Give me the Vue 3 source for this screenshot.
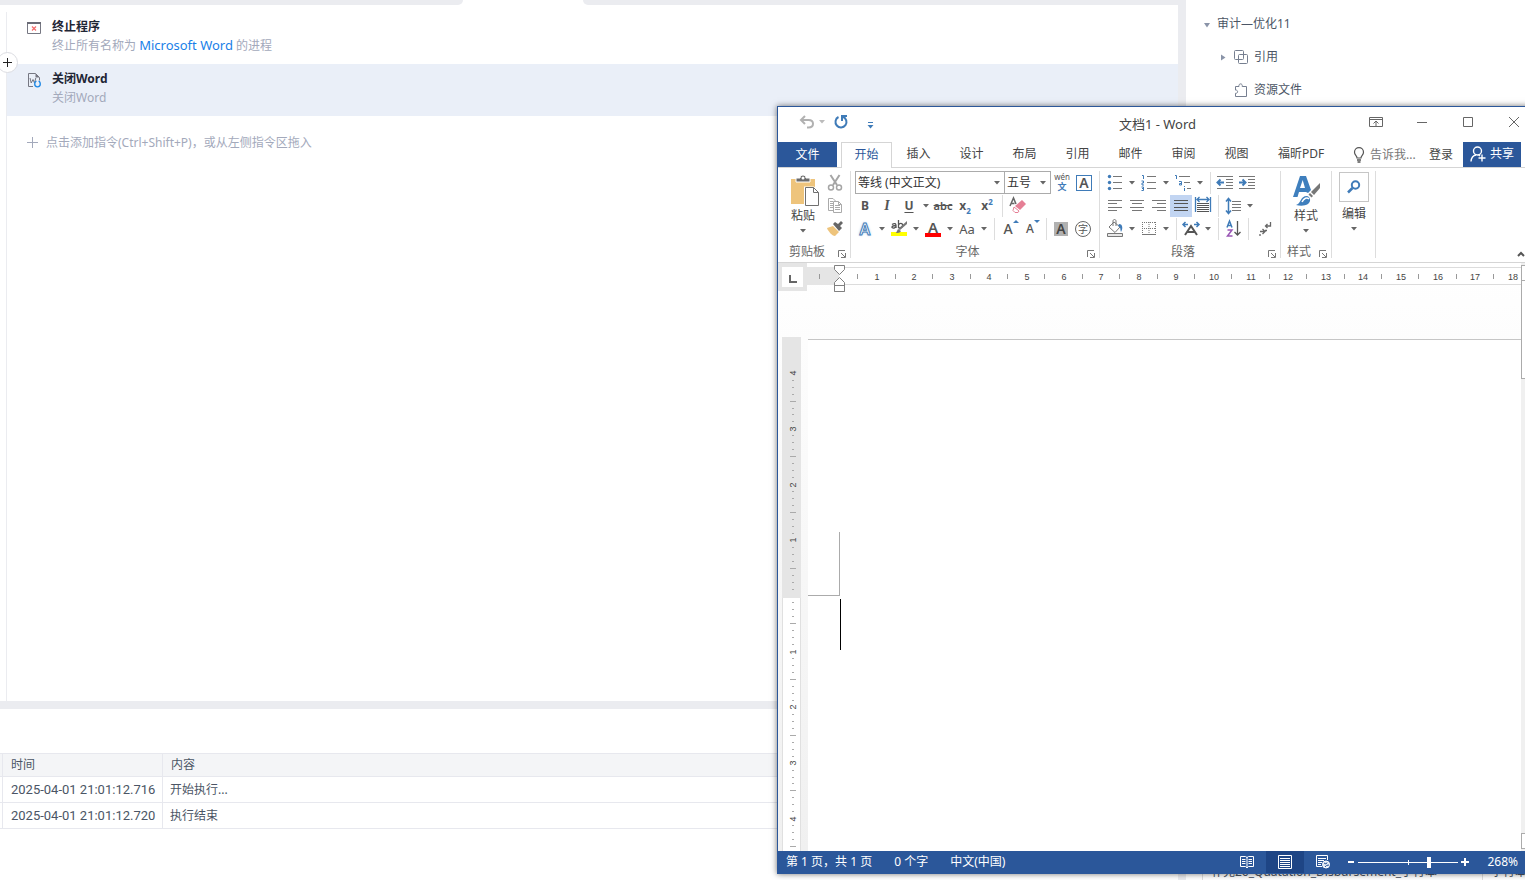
<template>
  <div class="desktop">
    <div class="main">
      <div class="tab-strip">
        <div class="strip left"></div>
        <div class="strip right"></div>
      </div>

      <div class="flow">
        <button class="insert" aria-label="添加"><svg width="9" height="9" viewBox="0 0 9 9"><path d="M4.500 0v9M0 4.500h9" /></svg></button>
        <div class="steps">
          <div v-for="s in steps" :key="s.title" :class="['step', { active: s.active }]">
            <svg v-if="s.icon === 'kill'" class="step-icon" width="16" height="16" viewBox="0 0 16 16">
              <path d="M1.500 2.500h13v11h-13z" fill="#fff" stroke="#767782" />
              <path d="M1 3h14" stroke="#6a6b76" stroke-width="2" />
              <path d="M6 6.500l4 4M10 6.500l-4 4" stroke="#f56c6c" stroke-width="1.200" />
            </svg>
            <svg v-else class="step-icon" width="16" height="16" viewBox="0 0 16 16">
              <path d="M2.500 1.500h7l4 4v3M7 14.500H2.500v-13" fill="none" stroke="#767782" />
              <path d="M9.500 1.500v4h4z" fill="#767782" />
              <path d="M4 6l1.200 5L7 7.500 8.500 11 9.800 6" fill="none" stroke="#767782" />
              <circle cx="11.500" cy="12" r="2.800" fill="#eaeff8" stroke="#1e88e5" stroke-width="1.300" />
              <path d="M11.500 8v3" stroke="#eaeff8" stroke-width="2" />
            </svg>
            <div>
              <div class="step-title">{{ s.title }}</div>
              <div class="step-desc">{{ s.before }}<template v-if="s.value">&nbsp;<a href="#">{{ s.value }}</a>&nbsp;</template>{{ s.after }}</div>
            </div>
          </div>
          <button class="add-step">
            <svg width="12" height="12" viewBox="0 0 12 12"><path d="M5.500 0v11M0 5.500h11" stroke="#a3a9bb" /></svg>
            点击添加指令(Ctrl+Shift+P)，或从左侧指令区拖入
          </button>
        </div>
      </div>

      <div class="log">
        <table>
          <thead>
            <tr><th class="gut"></th><th class="time">时间</th><th>内容</th></tr>
          </thead>
          <tbody>
            <tr v-for="l in logs" :key="l.time">
              <td></td><td class="stamp">{{ l.time }}</td><td>{{ l.text }}</td>
            </tr>
          </tbody>
        </table>
      </div>
    </div>

    <div class="side">
      <div class="node">
        <svg width="8" height="8" viewBox="0 0 8 8"><path d="M1 3h6L4 7.500z" fill="#8a94a8" /></svg>
        <span>审计—优化11</span>
      </div>
      <div class="node child">
        <svg width="8" height="8" viewBox="0 0 8 8"><path d="M1 1.500v6L5.500 4.500z" fill="#8a94a8" /></svg>
        <svg width="16" height="16" viewBox="0 0 16 16" fill="none" stroke="#767f90"><rect x="1.500" y="1.500" width="9" height="9" rx="1" /><rect x="5.500" y="5.500" width="9" height="9" rx="1" /></svg>
        <span>引用</span>
      </div>
      <div class="node child">
        <i class="blank"></i>
        <svg width="16" height="16" viewBox="0 0 16 16" fill="none" stroke="#767f90"><path d="M2.500 4.500h3.500c-.8-3.500 4-3.500 3.200 0h4.300v10h-11v-3.200c2.800.5 2.800-3.600 0-3.200z" /></svg>
        <span>资源文件</span>
      </div>
      <div class="vars">
        <span>补充26_Quatation_Disbursement_子行本</span>
        <span>字行本</span>
      </div>
    </div>

    <div class="word">
      <div class="titlebar">
        <div class="quick">
          <button aria-label="撤销"><svg width="16" height="16" viewBox="0 0 16 16" fill="none" stroke="#b1b1b1" stroke-width="2"><path d="M6 2L2 6l4 4M2 6h7.500c6 0 6 7.500 0 7.500H8" /></svg></button>
          <svg class="dd pale" width="6" height="4" viewBox="0 0 6 4"><path d="M0 0h6L3 3.500z" /></svg>
          <button class="redo" aria-label="重复"><svg width="16" height="16" viewBox="0 0 16 16" fill="none" stroke="#3f7bb8" stroke-width="2"><path d="M5.500 3A5.500 5.500 0 1 0 10 2.800" /><path d="M9 7V2h5" /></svg></button>
          <button class="more" aria-label="自定义"><svg width="7" height="8" viewBox="0 0 7 8"><path d="M1 1.500h5" stroke="#3f7bb8" /><path d="M.5 4h6l-3 3.500z" fill="#3f7bb8" /></svg></button>
        </div>
        <div class="caption">文档1 - Word</div>
        <div class="winbtns">
          <button v-for="b in winButtons" :key="b.label" :aria-label="b.label">
            <svg width="14" height="14" viewBox="0 0 14 14" fill="none" stroke="#666"><path :d="b.d" /></svg>
          </button>
        </div>
      </div>

      <div class="tabs">
        <button class="file">文件</button>
        <button class="tab current">开始</button>
        <button v-for="t in tabs" :key="t" class="tab">{{ t }}</button>
        <button class="tab wide">福昕PDF</button>
        <button class="tell">
          <svg width="12" height="16" viewBox="0 0 12 16" fill="none" stroke="#555" stroke-width="1.200"><path d="M4 11C4 8.500 1.500 8 1.500 5.200a4.500 4.500 0 0 1 9 0C10.500 8 8 8.500 8 11z" /><path d="M4 13h4M4.500 15h3" stroke-width="1.500" /></svg>
          告诉我...
        </button>
        <button class="login">登录</button>
        <button class="share">
          <svg width="16" height="16" viewBox="0 0 16 16" fill="none" stroke="#fff" stroke-width="1.400"><circle cx="7.500" cy="5" r="4" /><path d="M1 15.500c.3-3.500 2-6 5-6.500M8.500 9l1.500 1M12 8.500v7M8.500 12h7" /></svg>
          共享
        </button>
      </div>

      <div class="ribbon">
        <div class="group clip">
          <div class="body">
            <button class="big">
              <svg class="paste" width="30" height="32" viewBox="0 0 30 32">
                <path d="M1 4h24v25H1z" fill="#eec47c" />
                <path d="M6 7V3h4c0-4 6-4 6 0h4v4z" fill="#6b6b6b" stroke="#fff" stroke-width="1" />
                <circle cx="13" cy="3" r="1.500" fill="#fff" />
                <path d="M14 11.500h10l5 5v15H14z" fill="#fff" />
                <path d="M15.500 12.500h8l5 5v13h-13z" fill="#fff" stroke="#707070" />
                <path d="M23.500 12.500v5h5" fill="none" stroke="#707070" />
              </svg>
              粘贴
              <svg class="dd" width="6" height="4" viewBox="0 0 6 4"><path d="M0 0h6L3 3.500z" /></svg>
            </button>
            <div class="stack">
              <button v-for="n in ['cut', 'copy', 'brush']" :key="n" class="tool" :aria-label="n"><svg width="22" height="22" viewBox="0 0 22 22" v-html="icons[n]"></svg></button>
            </div>
          </div>
          <div class="label"><span>剪贴板</span><button class="launch" aria-label="剪贴板选项"><svg width="9" height="9" viewBox="0 0 9 9" v-html="launcher"></svg></button></div>
        </div>

        <div class="group font">
          <div class="row">
            <select v-model="family" class="family" aria-label="字体"><option>等线 (中文正文)</option></select>
            <select v-model="size" class="size" aria-label="字号"><option>五号</option></select>
            <button class="tool pinyin" aria-label="拼音指南"><span>wén</span><b>文</b></button>
            <button class="tool"><span class="boxed">A</span></button>
          </div>
          <div class="row">
            <button class="tool bold">B</button>
            <button class="tool italic">I</button>
            <button class="tool under">U</button>
            <button class="caret" aria-label="下划线样式"><svg class="dd" width="6" height="4" viewBox="0 0 6 4"><path d="M0 0h6L3 3.500z" /></svg></button>
            <button class="tool strike">abc</button>
            <button class="tool script">x<sub>2</sub></button>
            <button class="tool script">x<sup>2</sup></button>
            <i class="sep"></i>
            <button class="tool" aria-label="清除格式"><svg width="22" height="22" viewBox="0 0 22 22" v-html="icons.eraser"></svg></button>
          </div>
          <div class="row">
            <button class="tool glow">A</button>
            <button class="caret" aria-label="文本效果"><svg class="dd" width="6" height="4" viewBox="0 0 6 4"><path d="M0 0h6L3 3.500z" /></svg></button>
            <button class="tool" aria-label="突出显示"><svg width="22" height="22" viewBox="0 0 22 22" v-html="icons.marker"></svg></button>
            <button class="caret" aria-label="突出显示颜色"><svg class="dd" width="6" height="4" viewBox="0 0 6 4"><path d="M0 0h6L3 3.500z" /></svg></button>
            <button class="tool"><span class="ink">A</span></button>
            <button class="caret" aria-label="字体颜色"><svg class="dd" width="6" height="4" viewBox="0 0 6 4"><path d="M0 0h6L3 3.500z" /></svg></button>
            <button class="tool case">Aa</button>
            <button class="caret" aria-label="更改大小写"><svg class="dd" width="6" height="4" viewBox="0 0 6 4"><path d="M0 0h6L3 3.500z" /></svg></button>
            <i class="sep"></i>
            <button class="tool grow">A<svg width="6" height="14" viewBox="0 0 6 14"><path d="M0 5h6L3 2z" fill="#3f7bb8" /></svg></button>
            <button class="tool grow small">A<svg width="6" height="14" viewBox="0 0 6 14"><path d="M0 2h6L3 5z" fill="#3f7bb8" /></svg></button>
            <i class="sep"></i>
            <button class="tool"><span class="shade">A</span></button>
            <button class="tool"><span class="ring">字</span></button>
          </div>
          <div class="label"><span>字体</span><button class="launch" aria-label="字体选项"><svg width="9" height="9" viewBox="0 0 9 9" v-html="launcher"></svg></button></div>
        </div>

        <div class="group para">
          <div v-for="(r, i) in paraRows" :key="i" class="row">
            <template v-for="(n, j) in r" :key="j">
              <i v-if="n === '|'" class="sep"></i>
              <button v-else-if="n === 'v'" class="caret" aria-label="更多"><svg class="dd" width="6" height="4" viewBox="0 0 6 4"><path d="M0 0h6L3 3.500z" /></svg></button>
              <button v-else :class="['tool', { on: n === 'justify' }]" :aria-label="n"><svg width="22" height="22" viewBox="0 0 22 22" v-html="icons[n]"></svg></button>
            </template>
          </div>
          <div class="label"><span>段落</span><button class="launch" aria-label="段落选项"><svg width="9" height="9" viewBox="0 0 9 9" v-html="launcher"></svg></button></div>
        </div>

        <div class="group styles">
          <div class="body">
            <button class="big">
              <svg width="30" height="32" viewBox="0 0 30 32">
                <path fill-rule="evenodd" d="M2 22L9 1h6l5 14-3 3-2-1H8l-1.500 5zM9 13h5L11.700 5z" fill="#3f7fbd" />
                <path d="M29 8v5l-6 7-3-3z" fill="#777" />
                <path d="M19 18l3 3-1.500 1.500-3-3z" fill="#777" />
                <path d="M5 30c5-1 4-9 11-9 4 1 4 6 1 8-3 2-8 2-12 1z" fill="#3f7fbd" />
                <path d="M11 27c2-4 5-5 7-3" fill="none" stroke="#fff" stroke-width="1.500" />
              </svg>
              样式
              <svg class="dd" width="6" height="4" viewBox="0 0 6 4"><path d="M0 0h6L3 3.500z" /></svg>
            </button>
          </div>
          <div class="label"><span>样式</span><button class="launch" aria-label="样式选项"><svg width="9" height="9" viewBox="0 0 9 9" v-html="launcher"></svg></button></div>
        </div>

        <div class="group edit">
          <button class="big">
            <span class="frame"><svg width="14" height="14" viewBox="0 0 14 14" fill="none" stroke="#3f7bb8" stroke-width="2"><circle cx="8.500" cy="5" r="3.700" /><path d="M5.500 8L1 12.500" stroke-width="2.500" /></svg></span>
            编辑
            <svg class="dd" width="6" height="4" viewBox="0 0 6 4"><path d="M0 0h6L3 3.500z" /></svg>
          </button>
        </div>
        <button class="collapse" aria-label="折叠功能区"><svg width="8" height="6" viewBox="0 0 8 6"><path d="M1 5l3-3 3 3" fill="none" stroke="#555" stroke-width="2" /></svg></button>
      </div>

      <div class="doc">
        <div class="canvas">
          <div class="hruler">
            <div class="corner"><span></span></div>
            <svg class="hscale" height="28">
              <rect x="0" y="4" width="100%" height="17" fill="#fff" />
              <rect x="0" y="4" width="32" height="18" fill="#e5e5e5" />
              <path d="M32 4.500H714M32 21.500H714" stroke="#dcdcdc" />
              <path d="M12.500 11v5" stroke="#999" />
              <template v-for="n in 18" :key="n">
                <path :d="`M${hx(n - 0.5) - 1}.5 11v5`" stroke="#999" />
                <text :x="hx(n)" y="17" text-anchor="middle">{{ n }}</text>
              </template>
              <path d="M27.500 2.500h10v4l-5 5-5-5zM32.500 14.500l5 5v9h-10v-9zM27.500 22.500h10" fill="#fff" stroke="#808080" />
              <path d="M27.500 28.500h10" stroke="#808080" />
            </svg>
          </div>
          <div class="sheet-row">
            <svg class="vscale" width="30">
              <rect x="4" y="46" width="19" height="100%" fill="#e0e0e0" />
              <rect x="5" y="306" width="17" height="100%" fill="#fff" />
              <rect x="4" y="46" width="19" height="261" fill="#e5e5e5" />
              <path v-for="t in vticks" :key="t.y" :d="t.d" stroke="#aaa" />
              <text v-for="t in vnums" :key="t.y" :transform="`translate(18 ${t.y}) rotate(-90)`" text-anchor="middle">{{ t.n }}</text>
            </svg>
            <div class="page">
              <div class="margin-mark"></div>
              <div class="cursor"></div>
            </div>
          </div>
        </div>
        <div class="scroll">
          <button class="arrow" aria-label="向上滚动"></button>
          <div class="thumb"></div>
          <button class="arrow end" aria-label="向下滚动"></button>
        </div>
      </div>

      <div class="status">
        <span>第 1 页，共 1 页</span>
        <span>0 个字</span>
        <span>中文(中国)</span>
        <div class="views">
          <button aria-label="阅读视图"><svg width="14" height="14" viewBox="0 0 14 14" fill="none" stroke="#fff"><path d="M.5 1.500h5L7 2.500l1.500-1h5v10h-5L7 13l-1.500-1.500h-5zM7 2v11M2 4.500h3.500M2 6.500h3.500M2 8.500h3.500M8.500 4.500H12M8.500 6.500H12M8.500 8.500H12" /></svg></button>
          <button class="on" aria-label="页面视图"><svg width="14" height="14" viewBox="0 0 14 14" fill="none" stroke="#fff"><path d="M.5.5h13v13H.5zM2 3.500h10M2 5.500h10M2 7.500h10M2 9.500h10M2 11.500h10" /></svg></button>
          <button aria-label="Web 版式"><svg width="14" height="14" viewBox="0 0 14 14" fill="none" stroke="#fff"><path d="M6 11.500H.5v-11h11V5M2 3.500h8M2 5.500h6M2 7.500h4M2 9.500h3" /><circle cx="10" cy="9.500" r="3.500" fill="#dfe7f3" /><path d="M8 8l2 1 1-1.500M9 12l1.500-1.500L13 10" stroke="#2b579a" /></svg></button>
        </div>
        <div class="zoom">
          <button aria-label="缩小"><svg width="8" height="8" viewBox="0 0 8 8"><path d="M1 4h6" stroke="#fff" stroke-width="2" /></svg></button>
          <input v-model="zoom" type="range" min="0" max="100" aria-label="缩放">
          <button aria-label="放大"><svg width="8" height="8" viewBox="0 0 8 8"><path d="M0 4h8M4 0v8" stroke="#fff" stroke-width="2" /></svg></button>
        </div>
        <span class="pct">268%</span>
      </div>
    </div>
  </div>
</template>

<script setup>
import { ref } from 'vue'

const family = ref('等线 (中文正文)')
const size = ref('五号')
const zoom = ref(71)

const steps = [
  { icon: 'kill', title: '终止程序', before: '终止所有名称为', value: 'Microsoft Word', after: '的进程' },
  { icon: 'close', title: '关闭Word', before: '关闭Word', active: true },
]

const logs = [
  { time: '2025-04-01 21:01:12.716', text: '开始执行...' },
  { time: '2025-04-01 21:01:12.720', text: '执行结束' },
]

const tabs = ['插入', '设计', '布局', '引用', '邮件', '审阅', '视图']

const winButtons = [
  { label: '功能区显示选项', d: 'M.5 2.500h13v9H.5zM.5 4.500h13M7 11V6M4.500 8.500L7 6l2.500 2.500' },
  { label: '最小化', d: 'M2 7.500h10' },
  { label: '最大化', d: 'M2.500 2.500h9v9h-9z' },
  { label: '关闭', d: 'M2 2l10 10M12 2L2 12' },
]

const paraRows = [
  ['bullets', 'v', 'numbers', 'v', 'multi', 'v', '|', 'outdent', 'indent'],
  ['left', 'center', 'right', 'justify', 'spread', '|', 'spacing', 'v'],
  ['bucket', 'v', 'borders', 'v', '|', 'scale', 'v', '|', 'sort', '|', 'marks'],
]

const launcher = '<path d="M.5 7V.5H7M3 3l4 4M7.500 3v4.500H3" fill="none" stroke="#777"/>'

const g = (d, c = '#777', w = 1) => `<path d="${d}" fill="none" stroke="${c}" stroke-width="${w}"/>`
const blue = '#3f7bb8'

const icons = {
  cut: g('M6.500 3l6.500 10M15.500 3L9 13', '#a5a5a5', 2) + '<g fill="none" stroke="#a5a5a5" stroke-width="1.500"><circle cx="7" cy="15.500" r="2.500"/><circle cx="15" cy="15.500" r="2.500"/></g>',
  copy: g('M9 15.500H4.500v-12H9l2.500 2.500M6 6.500h3M6 8.500h3M6 10.500h3M6 12.500h3', '#aaa') + '<path d="M9.500 6.500h5l3 3v8h-8z" fill="#fff" stroke="#aaa"/>' + g('M14.500 6.500v3h3M11 10.500h5M11 12.500h5M11 14.500h5', '#aaa'),
  brush: '<path d="M3 10l6-2 6 6-4 4C8 18 4 13 3 10z" fill="#eec47c"/><path d="M9 6l2-2 3 2 3-3 2 2-3 3 2 2-3 3z" fill="#666"/>',
  eraser: '<path d="M9 11l7-6 4 4-6 6z" fill="#e57f95"/><path d="M8 12l5 4-1 1.500h-3l-2-2z" fill="#fff" stroke="#e57f95"/>' + g('M4 11L7.500 3 10 9M5.500 8.500h3', '#666', 1.5),
  marker: '<path d="M3 14h16v4H3z" fill="#ff0"/>' + g('M4 6.500c3-2 4-.5 4 1V10M8 7.500c-5 0-5 3-2 2.500l2-1M10.500 2v8M10.500 7c2-3 5-1 4 1-.500 2-3 2.500-4 1', '#555', 1.3) + '<path d="M19 3v3l-7 6-2-1z" fill="#777"/><path d="M8 15l2-4 3 2c-1 2-3 2-5 2z" fill="#777"/>',
  bullets: '<g fill="#3f7bb8"><circle cx="5.500" cy="4.500" r="1.700"/><circle cx="5.500" cy="10.500" r="1.700"/><circle cx="5.500" cy="16.500" r="1.700"/></g>' + g('M9 4.500h9M9 10.500h9M9 16.500h9'),
  numbers: g('M4 3.500h1.500V7M3.500 9h2v2h-1.500v2h2M3.500 15h2v3.500h-2M4 16.500h1.500', blue) + g('M9 4.500h9M9 10.500h9M9 16.500h9'),
  multi: g('M3 3.500h1.500V7M7 9.500h2.500V13H7.500v-1.500h2M12.500 14v1M12.500 16v3', blue) + g('M7 4.500h11M12 10.500h6M15 16.500h4'),
  outdent: g('M3 4.500h16M12 7.500h7M12 10.500h7M12 13.500h7M3 16.500h16') + g('M4 10.500h6M6.500 7.500L3.500 10.500l3 3', blue, 2),
  indent: g('M3 4.500h16M12 7.500h7M12 10.500h7M12 13.500h7M3 16.500h16') + g('M3 10.500h6M6.500 7.500l3 3-3 3', blue, 2),
  left: g('M4 5.500h14M4 8.500h9M4 12.500h14M4 15.500h9'),
  center: g('M4 5.500h14M6 8.500h10M4 12.500h14M6 15.500h10'),
  right: g('M4 5.500h14M9 8.500h9M4 12.500h14M9 15.500h9'),
  justify: g('M4 5.500h14M4 8.500h14M4 12.500h14M4 15.500h14', '#555'),
  spread: g('M3.500 2v15M18.500 2v15M5 4.500h12M7.500 2L5 4.500 7.500 7M14.500 2L17 4.500 14.500 7', blue, 1.3) + g('M5 8.500h12M5 10.500h12M5 12.500h12M5 14.500h12M5 16.500h12', '#555'),
  spacing: g('M6.500 4v14M4 6.500l2.500-3 2.500 3M4 15.500l2.500 3 2.500-3', blue, 1.5) + g('M10 6.500h9M10 9.500h9M10 12.500h9M10 15.500h9'),
  bucket: '<path d="M3.500 15.500h15v3h-15z" fill="#e8e8e8" stroke="#777"/>' + g('M5 9l5-5 6 5-5 5.500zM9 8V3c0-2 3-2 3 0v5') + '<path d="M15 6c4 0 4 5 2 8-1-3 0-5-3-6z" fill="#3f7bb8"/>',
  borders: '<path d="M4.500 4v12M11 4v12M17.500 4v12M4 4.500h14M4 10.500h14" fill="none" stroke="#777" stroke-dasharray="1 1"/>' + g('M4 16.500h14'),
  scale: g('M3 6.500h5M5.500 4L3 6.500 5.500 9M19 6.500h-5M16.500 4L19 6.500 16.500 9', blue, 1.5) + g('M5 17l6-9 6 9M7.500 14h7', '#555', 2),
  sort: g('M5 9.500L7.500 3 10 9.500M6 7.500h3', blue, 1.5) + g('M5.500 12h4.500l-4.500 6H10.500', '#9a57b5', 1.5) + g('M15.500 3v14M12.500 14l3 3 3-3', '#555', 1.3),
  marks: g('M18.500 4v4h-5M15.500 6l-2 2 2 2M8 13.500h5M10.500 11l2.500 2.500-2.500 2.500M15 12.500h-2M8 16v2', '#666', 1.3),
}

// one centimetre is a little over 37px across and 56px down
const hx = n => Math.round(32.6 + n * 37.4)
const vnums = [-4, -3, -2, -1, 1, 2, 3, 4].map(n => ({ n: Math.abs(n), y: Math.round(305 + n * 55.7) }))
const vticks = []
for (let i = -31; i <= 36; i++) {
  if (i % 8 === 0) continue
  const y = Math.floor(305 + (i * 55.7) / 8)
  vticks.push({ y, d: i % 4 === 0 ? `M12 ${y}.5h6` : `M14 ${y}.5h2` })
}
</script>

<style>
body { margin: 0; overflow: hidden; }
</style>

<style scoped>
* { box-sizing: border-box; }
.desktop { position: relative; height: 100vh; display: flex; overflow: hidden; background: #fff; font-family: "Noto Sans", "Noto Sans CJK SC", sans-serif; font-size: 12px; line-height: 18px; color: #4b5565; }
button { font: inherit; color: inherit; background: none; border: 0; padding: 0; display: flex; align-items: center; justify-content: center; white-space: nowrap; }
svg { flex: none; display: block; }

.main { flex: 1; min-width: 0; display: flex; flex-direction: column; border-right: 8px solid #ebecf0; }
.tab-strip { height: 5px; display: flex; gap: 120px; }
.strip { background: #ebecf0; }
.strip.left { width: 463px; border-radius: 0 0 5px 0; }
.strip.right { flex: 1; border-radius: 0 0 0 5px; }
.flow { flex: 1; position: relative; padding: 7px 0 0 6px; display: flex; }
.steps { flex: 1; border-left: 1px solid #ebecf0; }
.insert { position: absolute; left: -3px; top: 47px; width: 21px; height: 21px; border-radius: 50%; border: 1px solid #dcdde2; background: #fff; }
.insert path { stroke: #222; stroke-width: 1; }
.step { height: 52px; display: flex; gap: 10px; padding: 5px 0 0 19px; }
.step.active { background: #eaeff8; }
.step-icon { margin-top: 3px; }
.step-title { font-weight: 700; color: #1f2635; line-height: 19px; }
.step-desc { color: #a3a9bb; line-height: 19px; }
.step-desc a { color: #1a7fe8; font-size: 13px; text-decoration: none; }
.add-step { height: 54px; gap: 7px; padding-left: 20px; color: #a3a9bb; }

.log { height: 179px; border-top: 8px solid #ebecf0; padding-top: 44px; }
table { width: 100%; border-spacing: 0; table-layout: fixed; }
th, td { border-right: 1px solid #e7e8ee; border-bottom: 1px solid #e7e8ee; padding: 0 7px; text-align: left; font-weight: 400; height: 26px; }
th { background: #f4f5f7; border-top: 1px solid #e7e8ee; height: 24px; padding: 0 8px; }
.gut { width: 3px; padding: 0; }
th.time { width: 160px; }
td:first-child { padding: 0; }
.stamp { font-family: Roboto, sans-serif; font-size: 13px; padding: 0 8px; white-space: nowrap; }

.side { width: 339px; padding-top: 7px; display: flex; flex-direction: column; }
.node { height: 33px; display: flex; align-items: center; gap: 6px; padding-left: 17px; }
.node.child { padding-left: 34px; gap: 5px; }
.blank { width: 8px; }
.vars { margin: auto 0 0 16px; display: flex; height: 17px; }
.vars span { border-left: 1px solid #ddd; padding-left: 8px; width: 280px; flex: none; white-space: nowrap; }

.word { position: absolute; left: 777px; right: -13px; top: 106px; bottom: 6px; display: flex; flex-direction: column; background: #fff; border: 1px solid #2b579a; box-shadow: 0 0 6px rgba(0,0,0,.55); color: #444; }
.titlebar { height: 35px; display: grid; grid-template-columns: 1fr auto 1fr; }
.quick { display: flex; align-items: center; padding: 0 0 5px 21px; }
.quick .pale { margin: 0 8px 0 4px; }
.more { margin: 6px 0 0 18px; }
.caption { font-size: 13px; line-height: 35px; }
.winbtns { display: flex; justify-content: flex-end; padding-bottom: 5px; }
.winbtns button { width: 46px; }
.dd { fill: #666; }
.dd.pale { fill: #bbb; }

.tabs { height: 26px; display: flex; border-bottom: 1px solid #d5d5d5; padding-right: 16px; }
.file { width: 59px; background: #2b579a; color: #fff; margin-right: 4px; }
.tab { width: 53px; height: 24px; }
.tab.current { width: 51px; height: 26px; border: 1px solid #d5d5d5; border-bottom: 0; background: #fff; color: #2b579a; padding-bottom: 2px; }
.tab.wide { width: 76px; }
.tell { margin-left: 14px; gap: 5px; color: #777; }
.login { margin-left: auto; margin-right: 10px; }
.share { width: 58px; background: #2b579a; color: #fff; gap: 4px; padding-bottom: 2px; }

.ribbon { height: 95px; padding-top: 3px; display: flex; border-bottom: 1px solid #d5d5d5; }
.group { display: flex; flex-direction: column; background: linear-gradient(#ddd, #ddd) right top / 1px 87px no-repeat; }
.body { display: flex; height: 69px; }
.clip { width: 73px; }
.font { width: 249px; padding-left: 3px; }
.para { width: 181px; padding-left: 4px; }
.styles { width: 51px; }
.edit { width: 44px; align-items: center; }
.row { height: 23px; display: flex; align-items: center; }
.label { height: 22px; display: flex; align-items: center; color: #666; padding: 1px 3px 0 0; }
.label span { flex: 1; text-align: center; white-space: nowrap; }
.font .label, .para .label { margin-left: -4px; }
.launch { width: 12px; height: 14px; align-items: flex-end; }
.big { flex-direction: column; justify-content: flex-start; width: 50px; padding-top: 4px; }
.big .dd { margin-top: 4px; }
.paste { margin-left: 4px; }
.stack { width: 22px; margin-left: -4px; }
.stack .tool { height: 23px; }
.frame { width: 30px; height: 30px; border: 1px solid #c6c6c6; display: flex; align-items: center; justify-content: center; margin: -3px 0 3px; }
.tool { width: 22px; height: 22px; flex: none; color: #555; }
.tool.on { background: #c2d5f2; }
.caret { width: 12px; height: 22px; flex: none; }
.sep { width: 8px; height: 22px; background: linear-gradient(#ddd, #ddd) center / 1px 22px no-repeat; }
.collapse { margin: auto 12px 5px auto; }
select { appearance: none; height: 23px; border: 1px solid #ababab; border-radius: 0; padding: 0 2px; font: inherit; color: #333; background: #fff url("data:image/svg+xml,%3Csvg xmlns='http://www.w3.org/2000/svg' width='6' height='4'%3E%3Cpath d='M0 0h6L3 3.500z' fill='%23666'/%3E%3C/svg%3E") right 4px center no-repeat; }
.family { width: 150px; margin-left: 1px; }
.size { width: 47px; margin-left: -1px; }
.pinyin { flex-direction: column; font-size: 8px; line-height: 8px; gap: 1px; }
.pinyin b { color: #3f7bb8; font-size: 9px; line-height: 10px; }
.boxed { width: 16px; height: 16px; border: 1px solid #3f7bb8; font-size: 14px; line-height: 14px; font-weight: 600; }
.bold { font-weight: 700; }
.italic { font: italic 700 14px "Liberation Serif", serif; }
.under { font-weight: 700; text-decoration: underline; text-underline-offset: 2px; }
.strike { font-weight: 600; font-size: 11px; text-decoration: line-through; }
.script { font-weight: 700; }
.script sub, .script sup { font-size: 8px; line-height: 8px; color: #3f7bb8; }
.script sub { align-self: flex-end; margin-bottom: 2px; }
.script sup { align-self: flex-start; margin-top: 3px; }
.glow { font-size: 16px; font-weight: 600; color: #fff; -webkit-text-stroke: 1px #3f7bb8; text-shadow: 0 0 3px #8fb7e0; }
.ink { width: 16px; height: 17px; line-height: 14px; border-bottom: 4px solid #f00; font-size: 15px; font-weight: 600; }
.case { font-size: 13px; }
.grow { font-size: 14px; font-weight: 500; padding-left: 4px; }
.grow.small { font-size: 12px; }
.grow svg { align-self: flex-start; }
.shade { width: 14px; height: 14px; line-height: 14px; background: #b1b1b1; font-size: 14px; font-weight: 600; color: #444; }
.ring { width: 16px; height: 16px; border: 1px solid #666; border-radius: 50%; font-size: 10px; line-height: 14px; }

.doc { flex: 1; min-height: 0; display: flex; background: linear-gradient(#fff, #f0f0f0); }
.canvas { flex: 1; min-width: 0; display: flex; flex-direction: column; }
.hruler { height: 28px; display: flex; }
.corner { width: 29px; background: #e5e5e5; padding: 4px; }
.corner span { display: block; width: 21px; height: 20px; background: linear-gradient(#666, #666) 7px 8px / 2px 8px no-repeat, linear-gradient(#666, #666) 7px 14px / 8px 2px no-repeat, #fff; }
.hscale { flex: 1; min-width: 0; overflow: visible; }
.hscale text, .vscale text { font: 9px "Liberation Sans", sans-serif; fill: #444; }
.sheet-row { flex: 1; min-height: 0; display: flex; }
.vscale { height: 100%; }
.page { position: relative; flex: 1; margin-top: 48px; border-top: 1px solid #c6c6c6; background: #fff; }
.margin-mark { position: absolute; left: 0; top: 192px; width: 32px; height: 64px; border: solid #ababab; border-width: 0 1px 1px 0; }
.cursor { position: absolute; left: 32px; top: 259px; width: 1px; height: 51px; background: #000; }
.scroll { width: 16px; display: flex; flex-direction: column; background: #f0f0f0; padding: 2px 0; }
.arrow, .thumb { border: 1px solid #ababab; background: #fff; }
.arrow { height: 16px; }
.thumb { height: 99px; margin-top: -1px; }
.arrow.end { margin-top: auto; }

.status { height: 22px; display: flex; align-items: center; gap: 22px; padding: 0 19px 0 8px; background: #2b579a; color: #fff; }
.views { display: flex; align-self: stretch; margin-left: auto; }
.views button { width: 38px; }
.views .on { background: #1e4585; }
.zoom { display: flex; align-items: center; gap: 3px; margin: 0 -4px 0 -17px; }
input[type=range] { appearance: none; width: 100px; height: 12px; margin: 0; background: linear-gradient(#fff, #fff) center / 100% 1px no-repeat, linear-gradient(#fff, #fff) center / 1px 5px no-repeat; }
input[type=range]::-webkit-slider-thumb { appearance: none; width: 4px; height: 11px; background: #fff; }
</style>
